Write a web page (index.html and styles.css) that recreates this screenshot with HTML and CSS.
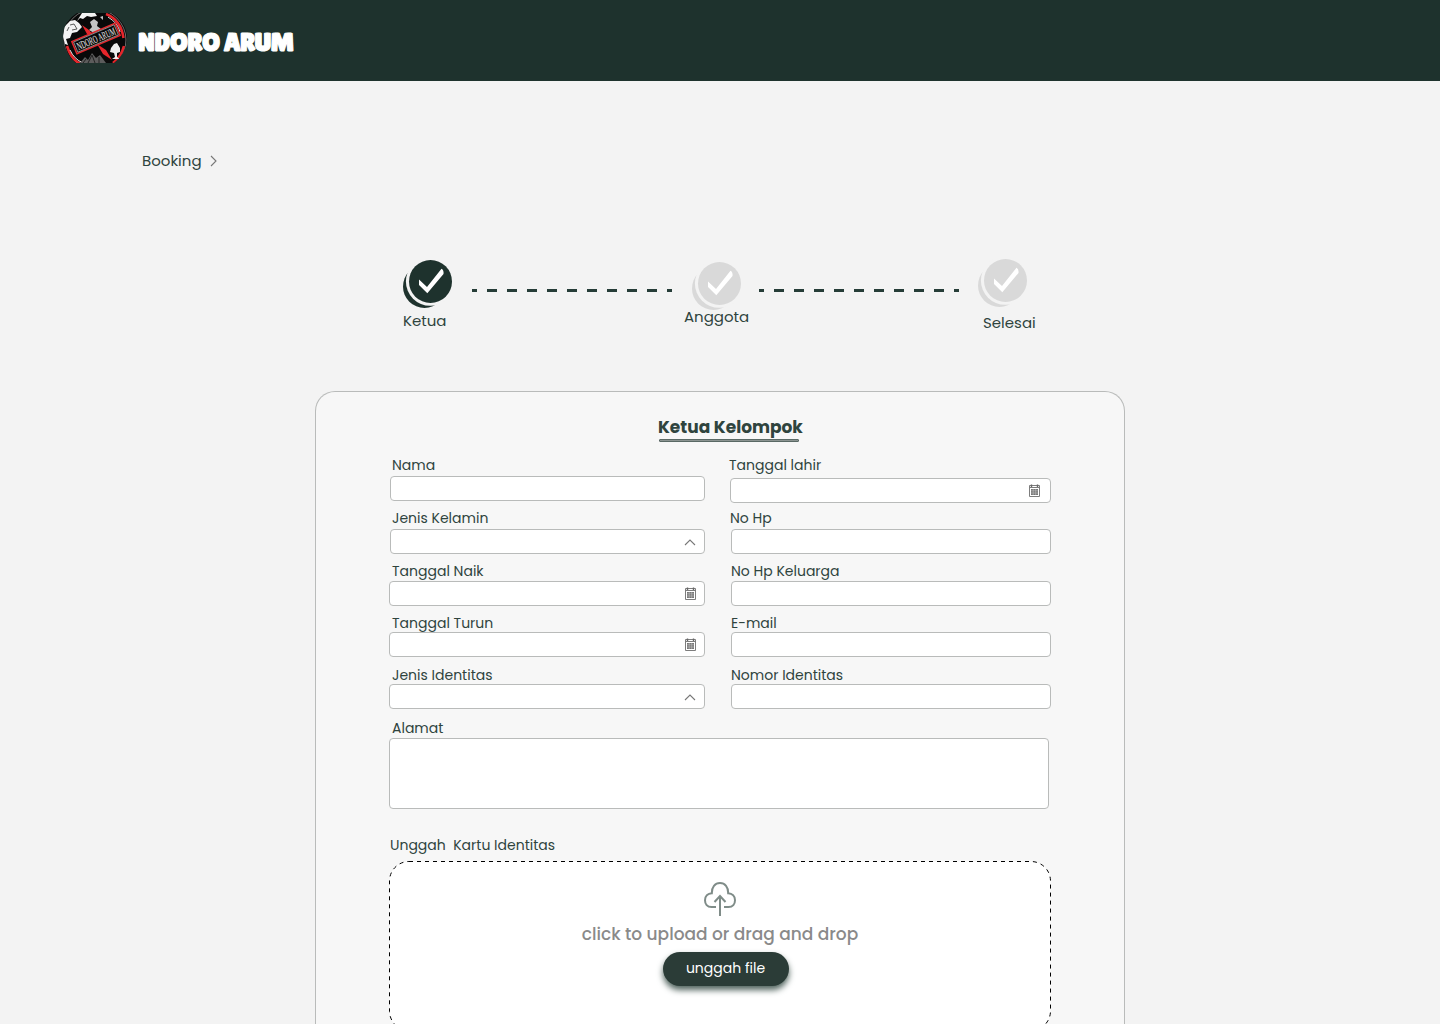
FILE: index.html
```html
<!DOCTYPE html>
<html lang="id">
<head>
<meta charset="utf-8">
<title>Ndoro Arum - Booking</title>
<link rel="stylesheet" href="styles.css">
</head>
<body>
<svg width="0" height="0" class="defs">
  <symbol id="calendar" viewBox="0 0 12 13">
    <path d="M1.500 1.500H11.500V12.500H1.500zM1.500 3.500H11.500" fill="none" stroke="#7d7d7d" stroke-width="1"/>
    <path d="M3.500 .5V3M9.500 .5V3" fill="none" stroke="#666" stroke-width="1.4"/>
    <path d="M3 5H10V11H3z" fill="#777"/>
    <path d="M3 6.800H10M3 9H10M5.200 5V11M7.700 5V11" stroke="#ccc" stroke-width=".5"/>
  </symbol>
  <symbol id="chevron-up" viewBox="0 0 12 8">
    <path d="M1 7L6 2L11 7" fill="none" stroke="#777" stroke-width="1.1"/>
  </symbol>
  <symbol id="step-check" viewBox="0 0 49 48">
    <circle cx="21.500" cy="26.500" r="21.500" fill="currentColor"/>
    <circle cx="27.200" cy="21.500" r="24.300" fill="#f3f3f3"/>
    <circle cx="27.500" cy="21.500" r="21.500" fill="currentColor"/>
    <path d="M16 19.500L24 27L38.500 8.800Q41 10 40.500 14L24.300 33.300L16 25z" fill="#fff"/>
  </symbol>
</svg>

<header class="header">
  <svg class="emblem" width="64" height="50" viewBox="0 0 64 50">
    <defs><clipPath id="round"><path d="M14 0H49Q64 10 64 26Q63 41 51 50H13Q0 39 0 22Q1 8 14 0z"/></clipPath></defs>
    <g clip-path="url(#round)">
      <path d="M0 0H64V50H0z" fill="#090909"/>
      <ellipse cx="32" cy="27" rx="31" ry="31" fill="none" stroke="#888" stroke-width=".8"/>
      <path d="M43 1Q58 7 60.500 25" fill="none" stroke="#e5262b" stroke-width="2.600"/>
      <path d="M4 33Q8 46 17 51M50 50Q58 44 61 33" fill="none" stroke="#e5262b" stroke-width="2.600"/>
      <path d="M45 4Q55 10 57 19M7 37Q11 46 20 50" fill="none" stroke="#ddd" stroke-width="1"/>
      <path d="M19 12L26 17L31 23L24 21zM34 31L43 37L49 47L40 41z" fill="#e5262b"/>
      <path d="M0 24L1 14L7 8L12 7L16 10L19 14L14 19L9 20L7 25L3 26L5 32L2 31zM14 8L19 0H32L34 3L28 4L24 3L20 6L17 5z" fill="#f3f3f3"/>
      <path d="M7 12L11 11L14 16L9 17M4 18L6 14" fill="none" stroke="#333" stroke-width=".8"/>
      <path d="M27 9L31 6L35 9L34 13L38 16L37 19L31 20L26 17L29 14zM37 4L40 3V7z" fill="#c4c4c4"/>
      <path d="M17 50L22 44L25 47L29 40L33 45L37 42L43 50z" fill="#5c5c5c"/>
      <path d="M25 50L29 42L32 50M20 50L23 46M36 50V44" fill="none" stroke="#222" stroke-width="1"/>
      <path d="M51 40L47 39L48 35L51 31L54 30L57 35L57 39L54 40L54 44L57 46H49L52 44z" fill="#eee"/>
    </g>
    <g transform="translate(33 25.5) rotate(-23)">
      <path d="M-23.500-6.500H23.500V6.500H-23.500z" fill="#090909" stroke="#e5262b" stroke-width="1.5"/>
      <path d="M-22-5.500H22V5.500H-22z" fill="none" stroke="#aaa" stroke-width=".7"/>
      <text class="emblem-text" x="-20.5" y="4" textLength="41" lengthAdjust="spacingAndGlyphs">NDORO ARUM</text>
    </g>
  </svg>
  <span class="brand">NDORO ARUM</span>
</header>

<nav class="breadcrumb">
  <span>Booking</span>
  <svg width="7" height="12" viewBox="0 0 7 12"><path d="M1 1L6 6L1 11" fill="none" stroke="#777" stroke-width="1.1"/></svg>
</nav>

<section class="stepper">
  <div class="step step-leader active">
    <svg width="49" height="48"><use href="#step-check"/></svg>
    <span>Ketua</span>
  </div>
  <svg class="dashes" width="200" height="3"><path d="M0 1.5H200" stroke="#263d38" stroke-width="3" stroke-dasharray="10" stroke-dashoffset="5"/></svg>
  <div class="step step-members">
    <svg width="49" height="48"><use href="#step-check"/></svg>
    <span>Anggota</span>
  </div>
  <svg class="dashes" width="200" height="3"><path d="M0 1.5H200" stroke="#263d38" stroke-width="3" stroke-dasharray="10" stroke-dashoffset="5"/></svg>
  <div class="step step-done">
    <svg width="49" height="48"><use href="#step-check"/></svg>
    <span>Selesai</span>
  </div>
</section>

<main class="card">
  <h1 class="title">Ketua Kelompok</h1>
  <div class="underline"></div>

  <div class="fields">
    <div class="field inset"><label>Nama</label><div class="box"></div></div>
    <div class="field birth"><label>Tanggal lahir</label><div class="box"><svg width="12" height="13"><use href="#calendar"/></svg></div></div>
    <div class="field inset"><label>Jenis Kelamin</label><div class="box"><svg width="12" height="8"><use href="#chevron-up"/></svg></div></div>
    <div class="field right phone"><label>No Hp</label><div class="box"></div></div>
    <div class="field"><label>Tanggal Naik</label><div class="box date"><svg width="12" height="13"><use href="#calendar"/></svg></div></div>
    <div class="field right"><label>No Hp Keluarga</label><div class="box"></div></div>
    <div class="field"><label>Tanggal Turun</label><div class="box date"><svg width="12" height="13"><use href="#calendar"/></svg></div></div>
    <div class="field right"><label>E-mail</label><div class="box"></div></div>
    <div class="field"><label>Jenis Identitas</label><div class="box"><svg width="12" height="8"><use href="#chevron-up"/></svg></div></div>
    <div class="field right"><label>Nomor Identitas</label><div class="box"></div></div>
  </div>

  <div class="address">
    <label>Alamat</label>
    <div class="box area"></div>
  </div>

  <div class="upload">
    <label>Unggah&nbsp; Kartu Identitas</label>
    <div class="dropzone">
      <svg class="outline" width="662" height="170" viewBox="0 0 662 170"><rect x=".5" y=".5" width="661" height="169" rx="19.5" fill="#fff" stroke="#000" stroke-dasharray="4"/></svg>
      <svg class="cloud" width="34" height="36" viewBox="0 0 34 36" fill="none" stroke="#7f8c88" stroke-width="2">
        <path d="M13 26H8.500C4.200 26 2 23 2 19.200C2 15.200 4.800 12.500 8.800 12.200C8.600 6 12 2 17 2S25.400 6 25.200 12.200C29.200 12.500 32 15.200 32 19.200C32 23 29.800 26 25.500 26H21"/>
        <path d="M17 35V15M11.500 21L17 15L22.500 21"/>
      </svg>
      <span class="hint">click to upload or drag and drop</span>
      <span class="button">unggah file</span>
    </div>
  </div>
</main>
</body>
</html>
```
FILE: styles.css
```css
* { box-sizing: border-box; }

html { height: 1024px; overflow: hidden; }

body {
  margin: 0;
  height: 1024px;
  overflow: hidden;
  background: #f3f3f3;
  color: #2f443e;
  font-family: Poppins, Inter, "Open Sans", sans-serif;
}

svg { display: block; flex: none; }
.defs { display: none; }

.header {
  display: flex;
  height: 81px;
  padding: 13px 0 0 63px;
  background: #1e322d;
}
.emblem { overflow: visible; }
.emblem-text {
  font: 11px "Liberation Serif", serif;
  fill: #eee;
}
.brand {
  margin: 12px 0 0 11px;
  color: #fff;
  font: 400 26px/34px "Lilita One", Lato, sans-serif;
  white-space: nowrap;
  letter-spacing: -0.6px;
  -webkit-text-stroke: 1.2px #fff;
}

.breadcrumb {
  display: flex;
  align-items: center;
  gap: 8px;
  height: 24px;
  margin: 67px 0 0 142px;
  font-size: 15px;
}
.breadcrumb svg { margin-top: 2px; }

.stepper {
  display: flex;
  align-items: flex-start;
  height: 132px;
  margin-top: 87px;
  padding-left: 403px;
}
.step {
  display: flex;
  flex-direction: column;
  color: #d9d9d9;
  font-size: 15px;
  line-height: 20px;
}
.step span { color: #2f443e; }
.step.active { color: #1e322d; }
.step-leader { width: 69px; padding-top: 1px; gap: 3px; }
.step-members { width: 75px; margin-left: 12px; padding-top: 3px; }
.step-members svg { margin-left: 8px; }
.step-members span { margin-top: -3px; }
.step-done { margin-left: 19px; gap: 6px; }
.step-done span { padding-left: 5px; }
.dashes { margin-top: 30px; }

.card {
  width: 810px;
  height: 633px;
  margin: 0 auto;
  padding: 23px 73px 0;
  background: #f7f7f7;
  border: 1px solid #b9bbba;
  border-bottom: 0;
  border-radius: 20px 20px 0 0;
  overflow: hidden;
}
.title {
  margin: 0 0 0 269px;
  font-size: 17px;
  line-height: 24px;
  font-weight: 700;
  white-space: nowrap;
}
.underline {
  width: 140px;
  height: 3px;
  margin: 0 0 14px 270px;
  background: #8b9491;
  border: 1px solid #5a6965;
  border-radius: 1px;
}

.fields {
  display: grid;
  grid-template-columns: 316px 321px;
  grid-template-rows: 45px 45px 44px 43px 44px;
  column-gap: 25px;
  row-gap: 8px;
}
.field {
  display: flex;
  flex-direction: column;
  justify-content: space-between;
}
.inset { padding-left: 1px; }
.inset label { padding-left: 2px; }
.birth { height: 47px; }
.birth label { padding-left: 0; margin-left: -1px; }
.birth .box { padding-right: 10px; padding-bottom: 1px; }
.right { padding-left: 1px; }
.right label { padding-left: 0; }
.phone label { margin-left: -1px; }
.field:nth-child(n+9) { padding-top: 1px; }
label {
  display: block;
  height: 18px;
  padding-left: 3px;
  font-size: 14px;
  line-height: 18px;
  white-space: pre;
}
.box {
  display: flex;
  align-items: center;
  justify-content: flex-end;
  height: 25px;
  padding-right: 8px;
  background: #fff;
  border: 1px solid #b9bbba;
  border-radius: 4px;
}
.date { padding-bottom: 1px; }

.address { margin-top: 10px; }
.address .area {
  width: 660px;
  height: 71px;
  margin-top: 1px;
}

.upload { margin-top: 27px; }
.upload label { padding-left: 1px; }
.dropzone {
  position: relative;
  display: flex;
  flex-direction: column;
  align-items: center;
  width: 662px;
  height: 170px;
  margin-top: 7px;
  padding-top: 20px;
}
.outline { position: absolute; top: 0; left: 0; }
.cloud { position: relative; }
.hint {
  position: relative;
  margin-top: 5px;
  color: #8a8a8a;
  font-size: 17px;
  line-height: 24px;
  font-weight: 500;
}
.button {
  position: relative;
  width: 126px;
  height: 34px;
  margin: 6px 0 0 12px;
  padding-right: 1px;
  background: #2b3c37;
  border-radius: 17px;
  box-shadow: 0 4px 6px #50635d;
  color: #fff;
  font-size: 14px;
  line-height: 32px;
  text-align: center;
}
```
